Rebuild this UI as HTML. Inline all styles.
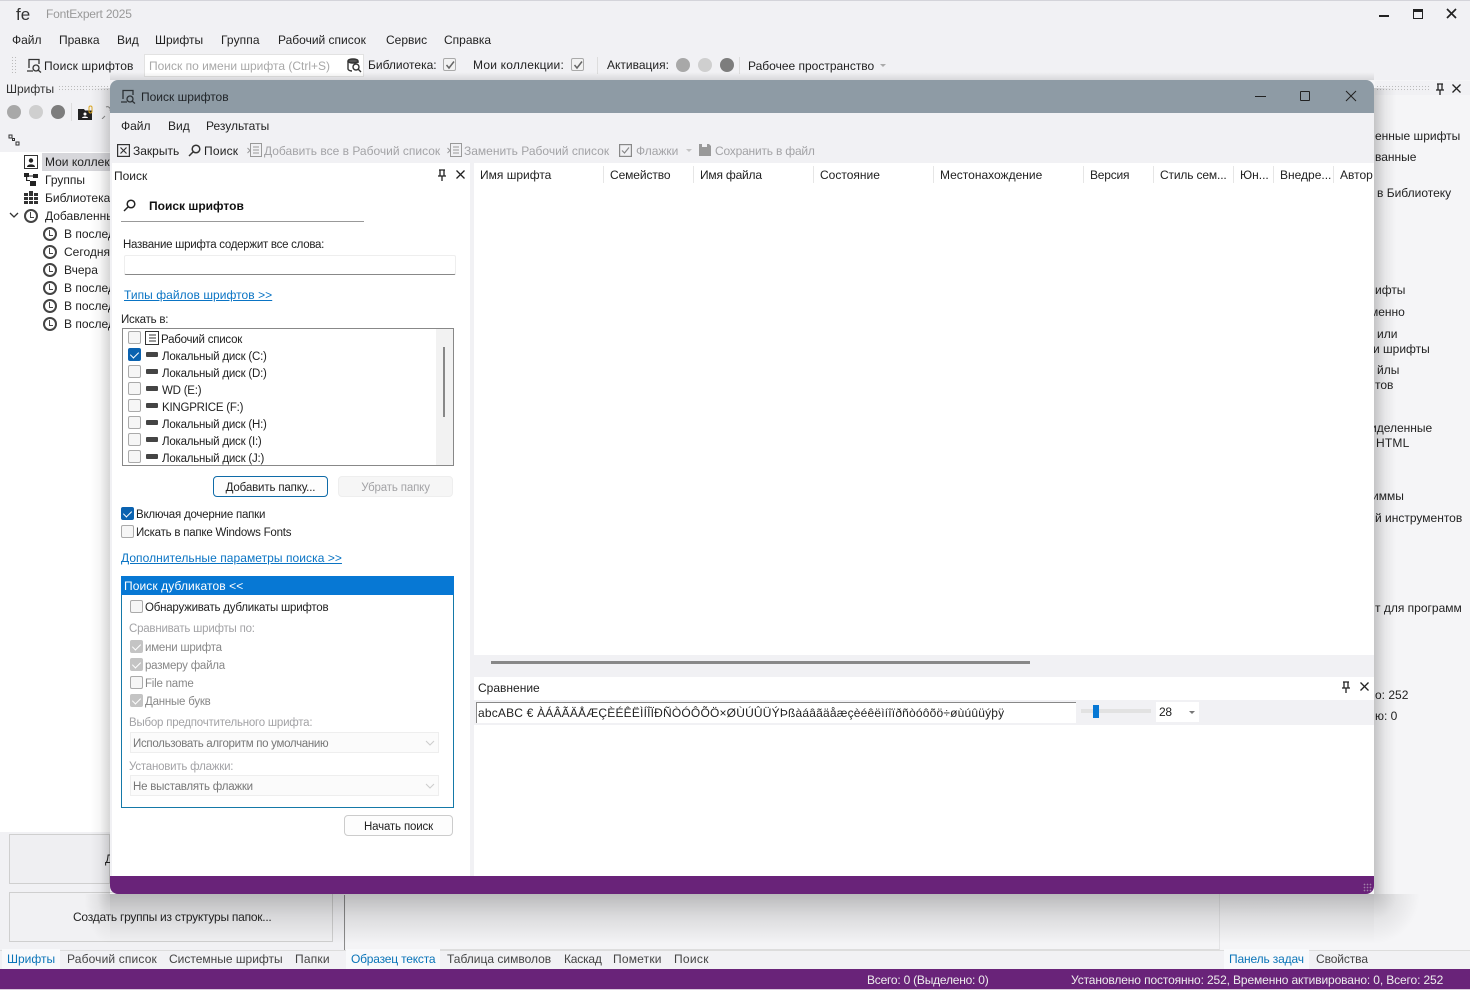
<!DOCTYPE html>
<html lang="ru"><head><meta charset="utf-8"><title>FontExpert 2025</title>
<style>
html,body{margin:0;padding:0;width:1470px;height:990px;overflow:hidden}
body{position:relative;background:#f1f1f4;font:12px/16px "Liberation Sans","Noto Sans CJK SC",sans-serif;color:#222}
div,span,svg{position:absolute;box-sizing:border-box}
.t{white-space:nowrap}
.g{color:#a3a3a6}.b{color:#0a74b8}.u{text-decoration:underline;color:#0a74c4}
.w{color:#fff}
.s{font-size:11.5px;letter-spacing:-.22px;margin-top:1px}
.cb{width:13px;height:13px;border:1px solid #aaa;background:#f6f6f6;border-radius:2px}
.on{background:#0a62b0;border-color:#0a62b0}
.dis{background:#c4c4c4;border-color:#c4c4c4}
.on:after,.dis:after{content:"";position:absolute;left:3px;top:1px;width:4px;height:7px;border:solid #fff;border-width:0 1.5px 1.5px 0;transform:rotate(45deg)}
.dr{width:12px;height:5px;background:#444;border-radius:1px}
.clk{width:14px;height:14px;border:2px solid #444;border-radius:50%}
.clk:after{content:"";position:absolute;left:4px;top:1px;width:3px;height:5px;border:solid #444;border-width:0 0 1.5px 1.5px}
.btn{background:#fdfdfd;border:1px solid #ccc;border-radius:4px;text-align:center;font-size:11.5px;letter-spacing:-.15px;line-height:22px}
.sep{width:1px;height:17px;background:#e6e6e6;top:166px}
.dots{height:7px;background-image:radial-gradient(#bbb 0.6px,transparent 0.8px);background-size:3px 3px}
.c{overflow:hidden;display:block}
</style></head><body>

<!-- right dock background (under the window chrome) -->
<div style="left:1220px;top:80px;width:250px;height:870px;background:#f5f5f7"></div>
<div style="left:1375px;top:81px;width:95px;height:14px;background:#f1f1f4"></div>

<!-- main window -->
<div style="left:0;top:0;width:1470px;height:1px;background:#d4d4da"></div>
<span class="t" style="left:16px;top:5px;font-size:17px;line-height:20px;color:#333">fe</span>
<span class="t g" style="left:46px;top:6px;color:#999;letter-spacing:-.2px">FontExpert 2025</span>
<div style="left:1379px;top:15px;width:10px;height:2px;background:#222"></div>
<div style="left:1413px;top:9px;width:10px;height:10px;border:1.5px solid #222;border-top-width:3px"></div>
<svg style="left:1446px;top:8px" width="11" height="11"><path d="M1 1L10 10M10 1L1 10" stroke="#222" stroke-width="1.7"/></svg>

<span class="t" style="left:12px;top:32px">Файл</span>
<span class="t" style="left:59px;top:32px">Правка</span>
<span class="t" style="left:117px;top:32px">Вид</span>
<span class="t" style="left:155px;top:32px">Шрифты</span>
<span class="t" style="left:221px;top:32px;letter-spacing:.1px">Группа</span>
<span class="t" style="left:278px;top:32px">Рабочий список</span>
<span class="t" style="left:386px;top:32px">Сервис</span>
<span class="t" style="left:444px;top:32px">Справка</span>

<div class="dots" style="left:11px;top:56px;width:6px;height:18px"></div>
<svg style="left:26px;top:58px" width="16" height="15" fill="none" stroke="#333" stroke-width="1.3"><path d="M3 10V1.500H13V6M1 13H7"/><circle cx="10" cy="10" r="3"/><path d="M12 12L15 14.500"/></svg>
<span class="t" style="left:44px;top:58px;letter-spacing:.15px">Поиск шрифтов</span>
<div style="left:144px;top:54px;width:220px;height:23px;background:#fff;border:1px solid #e2e2e2"></div>
<span class="t" style="left:149px;top:58px;color:#a8a8a8">Поиск по имени шрифта (Ctrl+S)</span>
<svg style="left:347px;top:58px" width="15" height="15" fill="none" stroke="#333" stroke-width="1.4"><ellipse cx="6" cy="3" rx="5" ry="2" fill="#555"/><path d="M1 3V11C1 12 3 13 5 13M11 3V5"/><circle cx="9" cy="9" r="3"/><path d="M11 11L14 14"/></svg>
<span class="t" style="left:368px;top:57px">Библиотека:</span>
<div class="cb" style="left:443px;top:58px;background:#f2f2f2"><svg style="left:1px;top:1px" width="10" height="10" fill="none" stroke="#666" stroke-width="1.5"><path d="M1.500 5L4 8L9 1.500"/></svg></div>
<span class="t" style="left:473px;top:57px;letter-spacing:.2px">Мои коллекции:</span>
<div class="cb" style="left:571px;top:58px;background:#f2f2f2"><svg style="left:1px;top:1px" width="10" height="10" fill="none" stroke="#666" stroke-width="1.5"><path d="M1.500 5L4 8L9 1.500"/></svg></div>
<div style="left:597px;top:57px;width:1px;height:17px;background:#ddd"></div>
<span class="t" style="left:607px;top:57px">Активация:</span>
<div style="left:676px;top:58px;width:14px;height:14px;border-radius:50%;background:#a8a8a8"></div>
<div style="left:698px;top:58px;width:14px;height:14px;border-radius:50%;background:#cfcfcf"></div>
<div style="left:720px;top:58px;width:14px;height:14px;border-radius:50%;background:#7d7d7d"></div>
<div style="left:739px;top:57px;width:1px;height:17px;background:#ddd"></div>
<span class="t" style="left:748px;top:58px">Рабочее пространство</span>
<div style="left:880px;top:64px;border:3px solid transparent;border-top:3px solid #aaa"></div>

<!-- left dock -->
<span class="t" style="left:6px;top:81px;color:#333">Шрифты</span>
<div class="dots" style="left:58px;top:85px;width:52px"></div>
<div style="left:7px;top:105px;width:14px;height:14px;border-radius:50%;background:#a8a8a8"></div>
<div style="left:29px;top:105px;width:14px;height:14px;border-radius:50%;background:#cfcfcf"></div>
<div style="left:51px;top:105px;width:14px;height:14px;border-radius:50%;background:#7d7d7d"></div>
<div style="left:71px;top:103px;width:1px;height:18px;background:#ddd"></div>
<svg style="left:78px;top:105px" width="16" height="16"><path d="M0 4H6L7 5.500H14V15H0Z" fill="#222"/><circle cx="7" cy="9" r="1.500" fill="#fff"/><path d="M4 13C4 11 10 11 10 13Z" fill="#fff"/><rect x="11" y="1" width="3" height="7" rx="1.500" fill="none" stroke="#d9a520"/></svg>
<svg style="left:100px;top:105px" width="10" height="14" fill="none" stroke="#888"><path d="M2 14L5 11M6 2A3 3 0 0 1 10 6"/></svg>
<svg style="left:8px;top:134px" width="12" height="12" fill="none" stroke="#333"><rect x="1" y="1" width="3" height="3"/><rect x="4.500" y="4.500" width="2" height="2"/><rect x="8" y="8" width="3" height="3"/></svg>
<div style="left:0;top:152px;width:110px;height:680px;background:#fff"></div>
<div style="left:42px;top:153px;width:68px;height:18px;background:#d7d7db"></div>
<svg style="left:24px;top:155px" width="14" height="14"><rect x=".5" y=".5" width="13" height="13" fill="#fff" stroke="#333"/><circle cx="7" cy="5.500" r="2.200" fill="#222"/><path d="M3 12C3 8.500 11 8.500 11 12Z" fill="#222"/></svg>
<span class="t c" style="left:45px;top:154px;width:65px">Мои коллекции</span>
<svg style="left:24px;top:173px" width="14" height="14" fill="#222"><rect x="0" y="0" width="5" height="4"/><rect x="9" y="1" width="5" height="4"/><rect x="6" y="8" width="6" height="5"/><path d="M2 4H3.200V7H6V8H2ZM5 2.500H9V3.500H5Z"/></svg>
<span class="t" style="left:45px;top:172px">Группы</span>
<svg style="left:24px;top:191px" width="14" height="14" fill="#333"><rect x="0" y="2" width="4" height="11"/><rect x="5" y="0" width="4" height="13"/><rect x="10" y="2" width="4" height="11"/><path d="M0 5H14V6H0ZM0 9H14V10H0Z" fill="#fff"/></svg>
<span class="t c" style="left:45px;top:190px;width:65px">Библиотека</span>
<svg style="left:9px;top:212px" width="10" height="7" fill="none" stroke="#333" stroke-width="1.300"><path d="M1 1L5 5L9 1"/></svg>
<div class="clk" style="left:24px;top:209px"></div>
<span class="t c" style="left:45px;top:208px;width:65px">Добавленные</span>
<div class="clk" style="left:43px;top:227px"></div><span class="t c" style="left:64px;top:226px;width:46px">В последний</span>
<div class="clk" style="left:43px;top:245px"></div><span class="t c" style="left:64px;top:244px;width:46px">Сегодня</span>
<div class="clk" style="left:43px;top:263px"></div><span class="t" style="left:64px;top:262px">Вчера</span>
<div class="clk" style="left:43px;top:281px"></div><span class="t c" style="left:64px;top:280px;width:46px">В последний</span>
<div class="clk" style="left:43px;top:299px"></div><span class="t c" style="left:64px;top:298px;width:46px">В последний</span>
<div class="clk" style="left:43px;top:317px"></div><span class="t c" style="left:64px;top:316px;width:46px">В последний</span>

<div style="left:9px;top:834px;width:101px;height:50px;background:#efeff2;border:1px solid #cfcfcf"></div>
<span class="t" style="left:105px;top:851px">Д</span>
<div style="left:9px;top:892px;width:324px;height:50px;background:#f1f1f3;border:1px solid #cfcfcf"></div>
<div style="left:344px;top:895px;width:1px;height:55px;background:#8a8a8a"></div>
<div style="left:346px;top:880px;width:874px;height:70px;background:#f4f4f6;border-bottom:1px solid #ddd;border-right:1px solid #e4e4e6"></div>
<div class="dots" style="left:1376px;top:85px;width:54px"></div>
<svg style="left:1435px;top:83px" width="10" height="12" fill="none" stroke="#222" stroke-width="1.300"><path d="M2 1H8M3 1V7M7 1V7M1 7H9M5 7V12"/></svg>
<svg style="left:1452px;top:84px" width="9" height="9" stroke="#222" stroke-width="1.300"><path d="M.5 .5L8.500 8.500M8.500 .5L.5 8.500"/></svg>
<span class="t" style="left:1375px;top:128px">енные шрифты</span>
<span class="t" style="left:1375px;top:149px">ванные</span>
<span class="t" style="left:1377px;top:185px">в Библиотеку</span>
<span class="t" style="left:1375px;top:282px">ифты</span>
<span class="t" style="left:1370px;top:304px">менно</span>
<span class="t" style="left:1377px;top:326px">или</span>
<span class="t" style="left:1373px;top:341px">и шрифты</span>
<span class="t" style="left:1377px;top:362px">йлы</span>
<span class="t" style="left:1375px;top:377px">тов</span>
<span class="t" style="left:1370px;top:420px">иделенные</span>
<span class="t" style="left:1376px;top:435px;letter-spacing:.2px">HTML</span>
<span class="t" style="left:1372px;top:488px">иммы</span>
<span class="t" style="left:1375px;top:510px">й инструментов</span>
<span class="t" style="left:1375px;top:600px">т для программ</span>
<span class="t" style="left:1375px;top:687px">о: 252</span>
<span class="t" style="left:1375px;top:708px">ю: 0</span>

<!-- tabs -->
<div style="left:0;top:950px;width:1470px;height:19px;background:#f1f1f4;border-top:1px solid #dcdcdc"></div>
<div style="left:2px;top:949px;width:58px;height:20px;background:#f8f9fb"></div>
<span class="t b" style="left:7px;top:951px">Шрифты</span>
<span class="t" style="left:67px;top:951px;color:#444;letter-spacing:.15px">Рабочий список</span>
<span class="t" style="left:169px;top:951px;color:#444">Системные шрифты</span>
<span class="t" style="left:295px;top:951px;color:#444;letter-spacing:.2px">Папки</span>
<div style="left:346px;top:949px;width:94px;height:20px;background:#f8f9fb"></div>
<span class="t b" style="left:351px;top:951px;letter-spacing:-.2px">Образец текста</span>
<span class="t" style="left:447px;top:951px;color:#444">Таблица символов</span>
<span class="t" style="left:564px;top:951px;color:#444;letter-spacing:-.2px">Каскад</span>
<span class="t" style="left:613px;top:951px;color:#444;letter-spacing:.2px">Пометки</span>
<span class="t" style="left:674px;top:951px;color:#444;letter-spacing:.3px">Поиск</span>
<div style="left:1224px;top:949px;width:85px;height:20px;background:#f8f9fb"></div>
<span class="t b" style="left:1229px;top:951px;letter-spacing:-.15px">Панель задач</span>
<span class="t" style="left:1316px;top:951px;color:#444;letter-spacing:-.1px">Свойства</span>

<!-- status -->
<div style="left:0;top:969px;width:1470px;height:21px;background:#692379;border-bottom:1px solid #d8c8dc"></div>
<span class="t" style="left:867px;top:972px;color:#eee;letter-spacing:-.22px">Всего: 0 (Выделено: 0)</span>
<span class="t" style="left:1071px;top:972px;color:#eee;letter-spacing:-.125px">Установлено постоянно: 252, Временно активировано: 0, Всего: 252</span>

<!-- explicit dialog shadow -->
<div style="left:110px;top:894px;width:1264px;height:50px;background:linear-gradient(rgba(0,0,0,.24),rgba(0,0,0,.1) 45%,rgba(0,0,0,0))"></div>
<div style="left:1374px;top:88px;width:22px;height:806px;background:linear-gradient(90deg,rgba(0,0,0,.2),rgba(0,0,0,.06) 50%,rgba(0,0,0,0))"></div>
<div style="left:90px;top:88px;width:20px;height:806px;background:linear-gradient(270deg,rgba(0,0,0,.16),rgba(0,0,0,.04) 50%,rgba(0,0,0,0))"></div>
<div style="left:110px;top:72px;width:1264px;height:8px;background:linear-gradient(0deg,rgba(0,0,0,.1),rgba(0,0,0,0))"></div>
<div style="left:1374px;top:894px;width:46px;height:50px;background:radial-gradient(ellipse 46px 50px at 0 0,rgba(0,0,0,.22),rgba(0,0,0,.07) 50%,rgba(0,0,0,0) 100%)"></div>
<div style="left:84px;top:894px;width:26px;height:50px;background:radial-gradient(ellipse 26px 50px at 100% 0,rgba(0,0,0,.2),rgba(0,0,0,.06) 50%,rgba(0,0,0,0) 100%)"></div>

<!-- dialog -->
<div style="left:110px;top:80px;width:1264px;height:814px;background:#f1f1f4;border-radius:8px;overflow:hidden">
<div style="left:0;top:0;width:1264px;height:33px;background:#8e9ba5"></div>
<div style="left:2px;top:83px;width:358px;height:713px;background:#fff"></div>
<div style="left:364px;top:83px;width:900px;height:492px;background:#fff"></div>
<div style="left:364px;top:597px;width:900px;height:23px;background:#fff"></div>
<div style="left:364px;top:645px;width:900px;height:151px;background:#fff"></div>
<div style="left:0;top:796px;width:1264px;height:18px;background:#692379"></div>
</div>
<span class="t" style="left:73px;top:909px;letter-spacing:-.25px">Создать группы из структуры папок...</span>
<svg style="left:120px;top:89px" width="16" height="15" fill="none" stroke="#2c3135" stroke-width="1.300"><path d="M3 10V1.500H13V6M1 13H7"/><circle cx="10" cy="10" r="3"/><path d="M12 12L15 14.500"/></svg>
<span class="t" style="left:141px;top:89px;color:#1f2327">Поиск шрифтов</span>
<div style="left:1255px;top:96px;width:11px;height:1px;background:#222"></div>
<div style="left:1300px;top:91px;width:10px;height:10px;border:1px solid #222;border-radius:1px"></div>
<svg style="left:1345px;top:90px" width="12" height="12" stroke="#222"><path d="M1 1L11 11M11 1L1 11"/></svg>

<span class="t" style="left:121px;top:118px">Файл</span>
<span class="t" style="left:168px;top:118px">Вид</span>
<span class="t" style="left:206px;top:118px">Результаты</span>

<svg style="left:117px;top:144px" width="13" height="13" fill="none" stroke="#333" stroke-width="1.200"><rect x=".6" y=".6" width="11.800" height="11.800"/><path d="M3.500 3.500L9.500 9.500M9.500 3.500L3.500 9.500"/></svg>
<span class="t" style="left:133px;top:143px">Закрыть</span>
<svg style="left:188px;top:144px" width="13" height="13" fill="none" stroke="#333" stroke-width="1.500"><circle cx="8" cy="5" r="3.800"/><path d="M5 8L1 12"/></svg>
<span class="t" style="left:204px;top:143px;letter-spacing:.2px">Поиск</span>
<svg style="left:247px;top:143px" width="15" height="14" fill="none" stroke="#999"><rect x="3.500" y=".5" width="11" height="13"/><path d="M6 4H12M6 7H12M6 10H12M.5 5L3 7.500L.5 10"/></svg>
<span class="t g" style="left:264px;top:143px">Добавить все в Рабочий список</span>
<svg style="left:447px;top:143px" width="15" height="14" fill="none" stroke="#999"><rect x="3.500" y=".5" width="11" height="13"/><path d="M6 4H12M6 7H12M6 10H12M.5 5L3 7.500L.5 10"/></svg>
<span class="t g" style="left:464px;top:143px">Заменить Рабочий список</span>
<svg style="left:619px;top:144px" width="13" height="13" fill="none" stroke="#888" stroke-width="1.200"><rect x=".6" y=".6" width="11.800" height="11.800"/><path d="M3 6.500L5.500 9L10 3.500"/></svg>
<span class="t g" style="left:636px;top:143px">Флажки</span>
<div style="left:686px;top:149px;border:3px solid transparent;border-top:3px solid #c4c4c4"></div>
<svg style="left:699px;top:144px" width="12" height="12"><path d="M0 0H10L12 2V12H0Z" fill="#999"/><rect x="3" y="0" width="5" height="3" fill="#f1f1f4"/></svg>
<span class="t g" style="left:715px;top:143px;letter-spacing:-.2px">Сохранить в файл</span>

<!-- search panel -->
<span class="t" style="left:114px;top:168px">Поиск</span>
<svg style="left:437px;top:169px" width="10" height="12" fill="none" stroke="#222" stroke-width="1.300"><path d="M2 1H8M3 1V7M7 1V7M1 7H9M5 7V12"/></svg>
<svg style="left:456px;top:170px" width="9" height="9" stroke="#222" stroke-width="1.300"><path d="M.5 .5L8.500 8.500M8.500 .5L.5 8.500"/></svg>
<svg style="left:123px;top:199px" width="13" height="13" fill="none" stroke="#222" stroke-width="1.500"><circle cx="8" cy="5" r="3.800"/><path d="M5 8L1 12"/></svg>
<span class="t" style="left:149px;top:198px;font-weight:bold;color:#111">Поиск шрифтов</span>
<div style="left:121px;top:221px;width:243px;height:1px;background:#999"></div>
<span class="t s" style="left:123px;top:236px;letter-spacing:-.27px">Название шрифта содержит все слова:</span>
<div style="left:124px;top:255px;width:332px;height:20px;background:#fff;border:1px solid #eee;border-bottom:1px solid #888;border-radius:2px"></div>
<span class="t u" style="left:124px;top:287px;letter-spacing:.05px">Типы файлов шрифтов &gt;&gt;</span>
<span class="t s" style="left:121px;top:311px">Искать в:</span>
<div style="left:122px;top:328px;width:332px;height:138px;background:#fff;border:1px solid #888"></div>
<div style="left:436px;top:329px;width:17px;height:136px;background:#f2f2f2"></div>
<div style="left:443px;top:347px;width:2px;height:70px;background:#888"></div>

<div class="cb" style="left:128px;top:331px"></div>
<svg style="left:145px;top:331px" width="14" height="14" fill="none" stroke="#333"><rect x=".5" y=".5" width="13" height="13"/><path d="M4 4H11M4 7H11M4 10H11"/></svg>
<span class="t s" style="left:161px;top:331px">Рабочий список</span>
<div class="cb on" style="left:128px;top:348px"></div><div class="dr" style="left:146px;top:352px"></div><span class="t s" style="left:162px;top:348px">Локальный диск (C:)</span>
<div class="cb" style="left:128px;top:365px"></div><div class="dr" style="left:146px;top:369px"></div><span class="t s" style="left:162px;top:365px">Локальный диск (D:)</span>
<div class="cb" style="left:128px;top:382px"></div><div class="dr" style="left:146px;top:386px"></div><span class="t s" style="left:162px;top:382px">WD (E:)</span>
<div class="cb" style="left:128px;top:399px"></div><div class="dr" style="left:146px;top:403px"></div><span class="t s" style="left:162px;top:399px">KINGPRICE (F:)</span>
<div class="cb" style="left:128px;top:416px"></div><div class="dr" style="left:146px;top:420px"></div><span class="t s" style="left:162px;top:416px">Локальный диск (H:)</span>
<div class="cb" style="left:128px;top:433px"></div><div class="dr" style="left:146px;top:437px"></div><span class="t s" style="left:162px;top:433px">Локальный диск (I:)</span>
<div class="cb" style="left:128px;top:450px"></div><div class="dr" style="left:146px;top:454px"></div><span class="t s" style="left:162px;top:450px">Локальный диск (J:)</span>

<div class="btn" style="left:213px;top:476px;width:115px;height:21px;border-color:#0f6ba8">Добавить папку...</div>
<div class="btn g" style="left:338px;top:476px;width:115px;height:21px;background:#f6f6f6;border-color:#eee">Убрать папку</div>
<div class="cb on" style="left:121px;top:507px"></div><span class="t s" style="left:136px;top:506px">Включая дочерние папки</span>
<div class="cb" style="left:121px;top:525px"></div><span class="t s" style="left:136px;top:524px">Искать в папке Windows Fonts</span>
<span class="t u" style="left:121px;top:550px;letter-spacing:.06px">Дополнительные параметры поиска &gt;&gt;</span>

<div style="left:121px;top:576px;width:333px;height:232px;border:1px solid #1579a8;background:#fff"></div>
<div style="left:121px;top:576px;width:333px;height:19px;background:#0778d4"></div>
<span class="t w" style="left:124px;top:578px;letter-spacing:.1px">Поиск дубликатов &lt;&lt;</span>
<div class="cb" style="left:130px;top:600px"></div><span class="t s" style="left:145px;top:599px">Обнаруживать дубликаты шрифтов</span>
<span class="t g s" style="left:129px;top:620px">Сравнивать шрифты по:</span>
<div class="cb dis" style="left:130px;top:640px"></div><span class="t s" style="left:145px;top:639px;color:#888">имени шрифта</span>
<div class="cb dis" style="left:130px;top:658px"></div><span class="t s" style="left:145px;top:657px;color:#888">размеру файла</span>
<div class="cb" style="left:130px;top:676px"></div><span class="t s" style="left:145px;top:675px;color:#888">File name</span>
<div class="cb dis" style="left:130px;top:694px"></div><span class="t s" style="left:145px;top:693px;color:#888">Данные букв</span>
<span class="t g s" style="left:129px;top:714px">Выбор предпочтительного шрифта:</span>
<div style="left:130px;top:732px;width:309px;height:21px;background:#fbfbfb;border:1px solid #eee"></div>
<span class="t s" style="left:133px;top:735px;color:#777;letter-spacing:-.3px">Использовать алгоритм по умолчанию</span>
<svg style="left:425px;top:740px" width="10" height="6" fill="none" stroke="#ccc"><path d="M1 1L5 5L9 1"/></svg>
<span class="t g s" style="left:129px;top:758px">Установить флажки:</span>
<div style="left:130px;top:775px;width:309px;height:21px;background:#fbfbfb;border:1px solid #eee"></div>
<span class="t s" style="left:133px;top:778px;color:#777">Не выставлять флажки</span>
<svg style="left:425px;top:783px" width="10" height="6" fill="none" stroke="#ccc"><path d="M1 1L5 5L9 1"/></svg>
<div class="btn" style="left:344px;top:815px;width:109px;height:21px">Начать поиск</div>

<!-- results headers -->
<span class="t" style="left:480px;top:167px">Имя шрифта</span>
<div class="sep" style="left:603px"></div>
<span class="t" style="left:610px;top:167px;letter-spacing:-.1px">Семейство</span>
<div class="sep" style="left:693px"></div>
<span class="t" style="left:700px;top:167px;letter-spacing:-.2px">Имя файла</span>
<div class="sep" style="left:813px"></div>
<span class="t" style="left:820px;top:167px">Состояние</span>
<div class="sep" style="left:933px"></div>
<span class="t" style="left:940px;top:167px">Местонахождение</span>
<div class="sep" style="left:1083px"></div>
<span class="t" style="left:1090px;top:167px;letter-spacing:-.2px">Версия</span>
<div class="sep" style="left:1153px"></div>
<span class="t" style="left:1160px;top:167px;letter-spacing:-.15px">Стиль сем...</span>
<div class="sep" style="left:1233px"></div>
<span class="t" style="left:1240px;top:167px">Юн...</span>
<div class="sep" style="left:1273px"></div>
<span class="t" style="left:1280px;top:167px">Внедре...</span>
<div class="sep" style="left:1333px"></div>
<span class="t c" style="left:1340px;top:167px;width:34px">Автор</span>
<div style="left:491px;top:661px;width:539px;height:3px;background:#888"></div>

<!-- comparison -->
<span class="t" style="left:478px;top:680px">Сравнение</span>
<svg style="left:1341px;top:681px" width="10" height="12" fill="none" stroke="#222" stroke-width="1.300"><path d="M2 1H8M3 1V7M7 1V7M1 7H9M5 7V12"/></svg>
<svg style="left:1360px;top:682px" width="9" height="9" stroke="#222" stroke-width="1.300"><path d="M.5 .5L8.500 8.500M8.500 .5L.5 8.500"/></svg>
<div style="left:476px;top:702px;width:600px;height:21px;background:#fff;border-top:1px solid #888;border-left:1px solid #888"></div>
<span class="t c" style="left:478px;top:705px;width:590px;letter-spacing:.19px;color:#222">abcABC € ÀÁÂÃÄÅÆÇÈÉÊËÌÍÎÏÐÑÒÓÔÕÖ×ØÙÚÛÜÝÞßàáâãäåæçèéêëìíîïðñòóôõö÷øùúûüýþÿ</span>
<div style="left:1081px;top:709px;width:70px;height:4px;background:#e2e2e2"></div>
<div style="left:1093px;top:705px;width:6px;height:13px;background:#0778d4"></div>
<div style="left:1156px;top:702px;width:43px;height:20px;background:#fff"></div>
<span class="t" style="left:1159px;top:704px;letter-spacing:-.3px">28</span>
<div style="left:1189px;top:711px;border:3px solid transparent;border-top:3px solid #777"></div>
<div class="dots" style="left:1363px;top:883px;width:9px;height:9px;background-image:radial-gradient(#a080a8 0.7px,transparent 0.9px)"></div>
</body></html>
